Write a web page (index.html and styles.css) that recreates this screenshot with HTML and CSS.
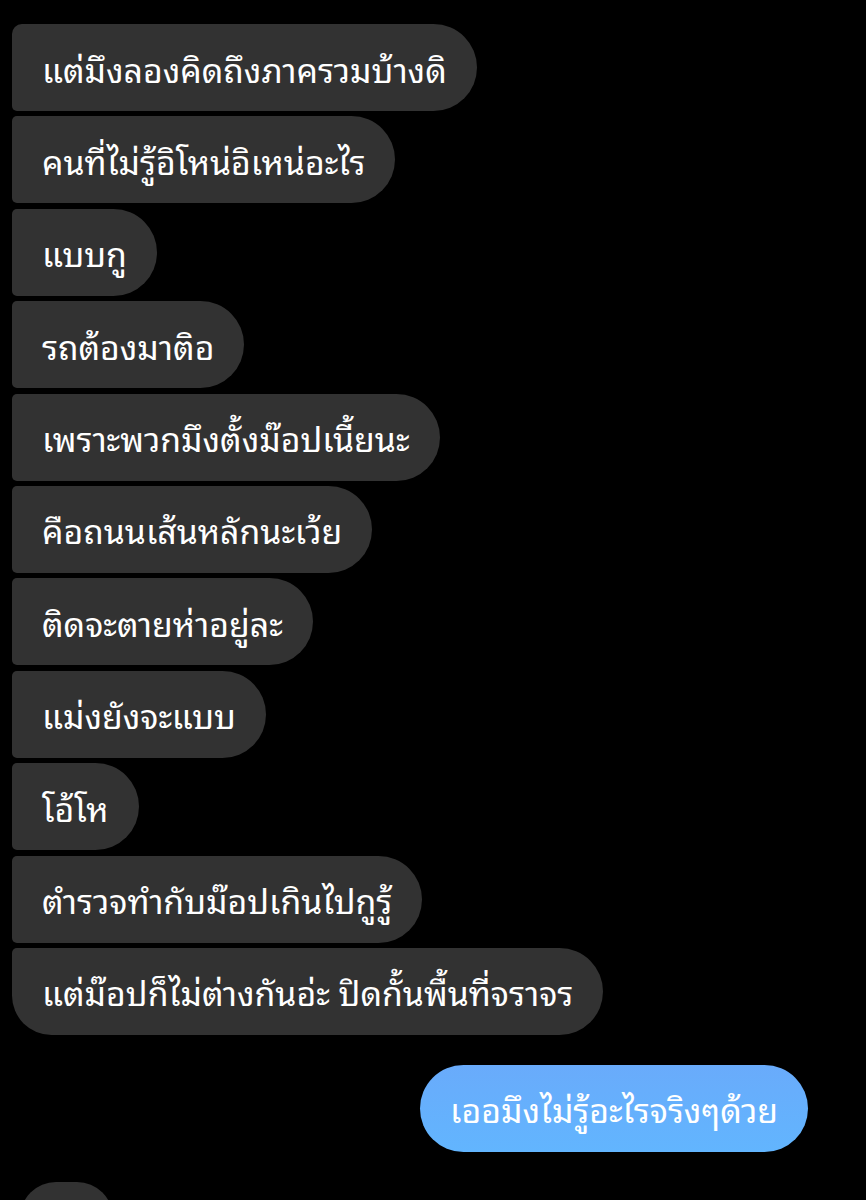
FILE: index.html
```html
<!DOCTYPE html>
<html lang="th">
<head>
<meta charset="utf-8">
<link rel="stylesheet" href="styles.css">
</head>
<body>
<div class="chat">
  <div class="group">
    <div class="bubble in first">แต่มึงลองคิดถึงภาครวมบ้างดิ</div>
    <div class="bubble in">คนที่ไม่รู้อิโหน่อิเหน่อะไร</div>
    <div class="bubble in">แบบกู</div>
    <div class="bubble in">รถต้องมาติอ</div>
    <div class="bubble in">เพราะพวกมึงตั้งม๊อปเนี้ยนะ</div>
    <div class="bubble in">คือถนนเส้นหลักนะเว้ย</div>
    <div class="bubble in">ติดจะตายห่าอยู่ละ</div>
    <div class="bubble in">แม่งยังจะแบบ</div>
    <div class="bubble in">โอ้โห</div>
    <div class="bubble in">ตำรวจทำกับม๊อปเกินไปกูรู้</div>
    <div class="bubble in last">แต่ม๊อปก็ไม่ต่างกันอ่ะ ปิดกั้นพื้นที่จราจร</div>
  </div>
  <div class="group out-group">
    <div class="bubble out">เออมึงไม่รู้อะไรจริงๆด้วย</div>
  </div>
  <div class="group clip">
    <div class="bubble typing"></div>
  </div>
</div>
</body>
</html>
```

FILE: styles.css
```css
html, body {
  margin: 0;
  padding: 0;
  background: #000;
  height: 1200px;
  overflow: hidden;
}
.chat {
  padding: 24px 0 0 12px;
  font-family: "Noto Sans Thai Looped", "Loma", "Garuda", "Noto Sans Thai", "Noto Sans", "DejaVu Sans", sans-serif;
  font-size: 33.8px;
  color: #fff;
}
.group {
  display: flex;
  flex-direction: column;
  align-items: flex-start;
}
.bubble {
  box-sizing: border-box;
  height: 87px;
  display: flex;
  align-items: center;
  padding: 0 30px;
  margin-bottom: 5.4px;
  white-space: nowrap;
  border-radius: 5px 44px 44px 5px;
}
.bubble.in {
  background: #323232;
}
.bubble.first {
  border-top-left-radius: 10px;
}
.bubble.last {
  border-bottom-left-radius: 40px;
  margin-bottom: 30px;
}
.out-group {
  align-items: flex-end;
  padding-right: 58px;
}
.bubble.out {
  background: linear-gradient(180deg, #69abfb 0%, #62b5fe 100%);
  border-radius: 44px;
  margin-bottom: 30px;
}
.clip {
  height: 18px;
  overflow: hidden;
}
.bubble.typing {
  background: #323232;
  width: 93px;
  margin-left: 8px;
  border-radius: 36px;
  flex-shrink: 0;
}
```
